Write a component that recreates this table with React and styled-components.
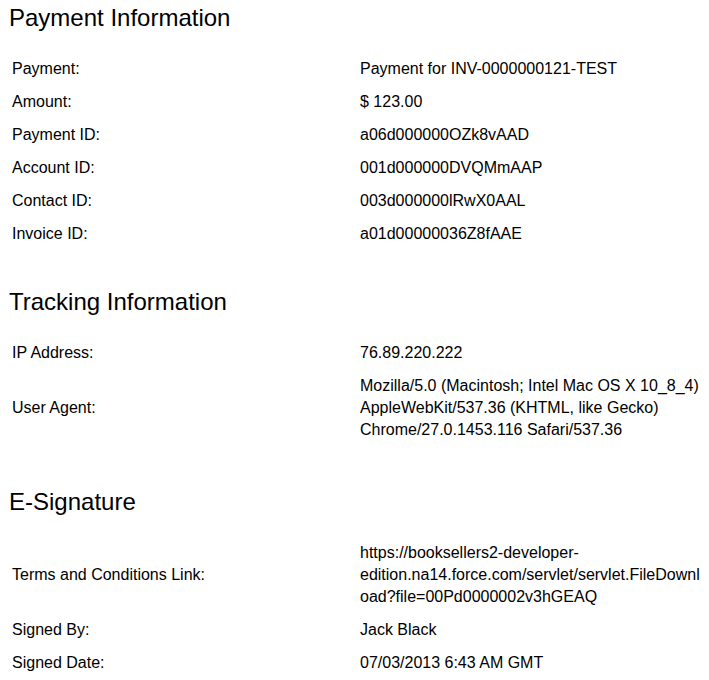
import React from 'react';
import styled, { createGlobalStyle } from 'styled-components';

const GlobalStyle = createGlobalStyle`
  html, body {
    margin: 0;
    padding: 0;
    background: #fff;
  }
  body {
    font-family: 'Liberation Sans', Arial, sans-serif;
    color: #000;
  }
`;

const Page = styled.div`
  padding: 4px 6px 0 9px;
`;

const Section = styled.section`
  margin-bottom: ${(p) => p.$after || 43}px;

  &:last-child {
    margin-bottom: 0;
  }
`;

const Heading = styled.h2`
  margin: 0 0 26px 0;
  font-size: 24px;
  font-weight: 400;
  line-height: 28px;
`;

const InfoGrid = styled.div`
  display: grid;
  grid-template-columns: 351px 1fr;
  row-gap: 11px;
  align-items: center;
  font-size: 16px;
  line-height: 22px;
`;

const Label = styled.div`
  padding-left: 3px;
`;

const Value = styled.div`
  overflow-wrap: anywhere;
`;

const sections = [
  {
    title: 'Payment Information',
    rows: [
      ['Payment:', 'Payment for INV-0000000121-TEST'],
      ['Amount:', '$ 123.00'],
      ['Payment ID:', 'a06d000000OZk8vAAD'],
      ['Account ID:', '001d000000DVQMmAAP'],
      ['Contact ID:', '003d000000lRwX0AAL'],
      ['Invoice ID:', 'a01d00000036Z8fAAE'],
    ],
  },
  {
    title: 'Tracking Information',
    after: 47,
    rows: [
      ['IP Address:', '76.89.220.222'],
      [
        'User Agent:',
        'Mozilla/5.0 (Macintosh; Intel Mac OS X 10_8_4) AppleWebKit/537.36 (KHTML, like Gecko) Chrome/27.0.1453.116 Safari/537.36',
      ],
    ],
  },
  {
    title: 'E-Signature',
    rows: [
      [
        'Terms and Conditions Link:',
        <>
          https://booksellers2-developer-edition.na14.force.com/servlet/servlet.FileDownl
          <wbr />
          oad?file=00Pd0000002v3hGEAQ
        </>,
      ],
      ['Signed By:', 'Jack Black'],
      ['Signed Date:', '07/03/2013 6:43 AM GMT'],
    ],
  },
];

const App = () => (
  <Page>
    <GlobalStyle />
    {sections.map((section) => (
      <Section key={section.title} $after={section.after}>
        <Heading>{section.title}</Heading>
        <InfoGrid>
          {section.rows.map(([label, value], i) => (
            <React.Fragment key={`row_${i}`}>
              <Label>{label}</Label>
              <Value>{value}</Value>
            </React.Fragment>
          ))}
        </InfoGrid>
      </Section>
    ))}
  </Page>
);

export default App;
